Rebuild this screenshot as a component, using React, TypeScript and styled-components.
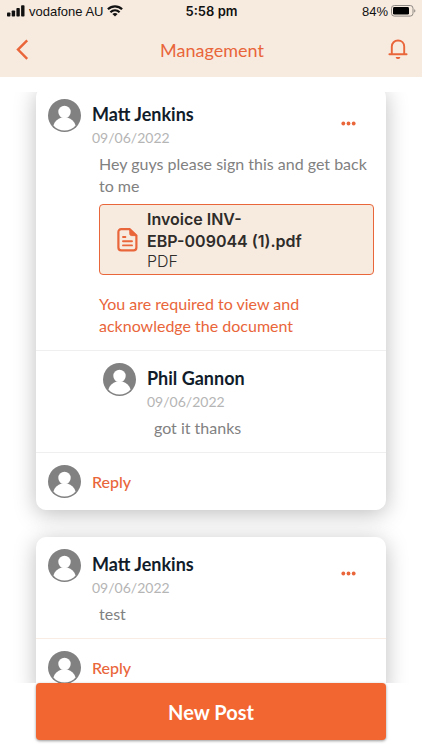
import React from "react";
import styled, { createGlobalStyle } from "styled-components";

const ORANGE = "#e9653a";
const SAND = "#f7ebe0";

const GlobalStyle = createGlobalStyle`
  *, *::before, *::after { box-sizing: border-box; }
  body {
    margin: 0;
    background: #fff;
    font-family: Lato, "Liberation Sans", sans-serif;
  }
  button { font: inherit; border: 0; padding: 0; background: none; cursor: pointer; }
  h1, h2, p { margin: 0; }
  svg { display: block; flex: none; }
`;

const Screen = styled.div`
  display: flex;
  flex-direction: column;
  height: 100vh;
`;

const TopArea = styled.header`
  flex: none;
  background: ${SAND};
`;

const StatusBar = styled.div`
  display: grid;
  grid-template-columns: 1fr auto 1fr;
  align-items: center;
  height: 22px;
  padding: 0 6px 0 7px;
  font-family: Inter, sans-serif;
  font-size: 13px;
  color: #111;
`;

const StatusGroup = styled.div<{ $end?: boolean }>`
  display: flex;
  align-items: center;
  gap: ${(p) => (p.$end ? "3px" : "4px")};
  justify-content: ${(p) => (p.$end ? "flex-end" : "flex-start")};
  font-family: "Liberation Sans", sans-serif;
  white-space: nowrap;
`;

const Clock = styled.time`
  font-weight: 600;
`;

const NavBar = styled.nav`
  display: grid;
  grid-template-columns: 1fr auto 1fr;
  align-items: center;
  height: 55px;
  padding: 0 12px 0 14px;
`;

const IconButton = styled.button<{ $end?: boolean }>`
  color: ${ORANGE};
  justify-self: ${(p) => (p.$end ? "end" : "start")};
`;

const Title = styled.h1`
  font-size: 18px;
  line-height: 24px;
  font-weight: 400;
  color: ${ORANGE};
`;

const Feed = styled.main`
  flex: 1;
  min-height: 0;
  margin-top: 15px;
  padding: 0 36px;
  overflow-y: auto;
  scrollbar-width: none;
`;

const CardList = styled.div`
  display: flex;
  flex-direction: column;
  gap: 27px;
  margin: -5px 0 24px;
`;

const Card = styled.article`
  border-radius: 10px;
  background: #fff;
  box-shadow: 0 4px 22px rgba(0, 0, 0, 0.26);
`;

const Entry = styled.section<{ $nested?: boolean }>`
  display: flex;
  align-items: flex-start;
  gap: 11px;
  padding: 12px 12px 13px ${(p) => (p.$nested ? "67px" : "12px")};
`;

const EntryMain = styled.div`
  flex: 1;
  min-width: 0;
`;

const EntryHead = styled.div`
  display: flex;
  align-items: center;
  justify-content: space-between;
  padding-right: 18px;
`;

const Author = styled.h2`
  font-size: 18px;
  line-height: 30px;
  font-weight: 700;
  color: #111c2b;
`;

const PostDate = styled.time`
  display: block;
  font-size: 14px;
  line-height: 18px;
  color: #b5b5b5;
`;

const MenuButton = styled.button`
  color: ${ORANGE};
`;

const Body = styled.div`
  padding: 6px 0 0 7px;
`;

const Text = styled.p`
  font-size: 16px;
  line-height: 22px;
  color: #818181;
`;

const Notice = styled(Text)`
  margin-top: 18px;
  color: ${ORANGE};
`;

const Attachment = styled.a`
  display: flex;
  align-items: center;
  gap: 9px;
  margin-top: 7px;
  padding: 3px 48px 3px 17px;
  border: 1px solid ${ORANGE};
  border-radius: 4px;
  background: ${SAND};
  color: ${ORANGE};
  text-decoration: none;
`;

const FileInfo = styled.span`
  display: flex;
  flex-direction: column;
  font-family: Inter, sans-serif;
  color: #2f2c2a;
`;

const FileName = styled.span`
  font-size: 16px;
  line-height: 22px;
  font-weight: 600;
`;

const FileKind = styled.span`
  font-size: 16px;
  line-height: 19px;
  font-weight: 300;
`;

const ReplyRow = styled.div`
  display: flex;
  align-items: center;
  gap: 11px;
  padding: 12px;
`;

const Divider = styled.hr<{ $warm?: boolean }>`
  height: 1px;
  margin: 0;
  border: 0;
  background: ${(p) => (p.$warm ? "#f8ece3" : "#efefef")};
`;

const ReplyButton = styled.button`
  font-size: 16px;
  line-height: 22px;
  font-weight: 500;
  color: ${ORANGE};
`;

const Footer = styled.footer`
  flex: none;
  display: flex;
  padding: 0 36px 10px;
`;

const NewPost = styled.button`
  flex: 1;
  height: 57px;
  border-radius: 4px;
  background: #f26631;
  box-shadow: 0 1px 3px rgba(0, 0, 0, 0.4);
  font-size: 20px;
  font-weight: 700;
  color: #fff;
`;

const Avatar = () => (
  <svg width="33" height="33" viewBox="0 0 33 33" aria-hidden="true">
    <circle cx="16.5" cy="16.5" r="16.5" fill="#818181" />
    <circle cx="16.5" cy="13" r="6.2" fill="#fff" />
    <path d="M5.4 26.4C6.4 22.6 9.6 20 13.6 18.6h5.8C23.4 20 26.6 22.6 27.6 26.4C24.8 29.8 20.8 31.4 16.5 31.4S8.2 29.8 5.4 26.4z" fill="#fff" />
  </svg>
);

const SignalIcon = () => (
  <svg width="18" height="12" viewBox="0 0 18 12" fill="#111" aria-hidden="true">
    <rect x="0" y="7.5" width="3.4" height="4" rx="0.8" />
    <rect x="4.7" y="5.5" width="3.4" height="6" rx="0.8" />
    <rect x="9.4" y="3" width="3.4" height="8.5" rx="0.8" />
    <rect x="14.1" y="0.2" width="3.4" height="11.3" rx="0.8" />
  </svg>
);

const WifiIcon = () => (
  <svg width="16" height="12" viewBox="0 0 16 12" fill="none" stroke="#111" strokeWidth="2.2" aria-hidden="true">
    <path d="M.9 4.3C5 .3 11 .3 15.1 4.3" />
    <path d="M3.4 7.2C6.1 4.7 9.9 4.7 12.6 7.2" />
    <path d="M8 11.6 5.4 9C7 7.8 9 7.8 10.6 9z" fill="#111" stroke="none" />
  </svg>
);

const BatteryIcon = () => (
  <svg width="25" height="12" viewBox="0 0 25 12" aria-hidden="true">
    <rect x="0.5" y="0.5" width="21.5" height="10.6" rx="2.8" fill="none" stroke="#8f8983" />
    <rect x="2" y="2" width="16" height="7.6" rx="1.4" fill="#000" />
    <path d="M23.2 4.2C24.8 4.5 24.8 7.2 23.2 7.5z" fill="#8f8983" />
  </svg>
);

const BackIcon = () => (
  <svg width="16" height="22" viewBox="0 0 16 22" fill="none" stroke="currentColor" strokeWidth="2.4" aria-hidden="true">
    <path d="M13.2 1.4 4 10.6l9.2 9.2" />
  </svg>
);

const BellIcon = () => (
  <svg width="24" height="24" viewBox="0 0 24 24" fill="none" stroke="currentColor" strokeWidth="1.9" strokeLinecap="round" strokeLinejoin="round" aria-hidden="true">
    <path d="M3.4 16.2h17.2M5.8 16V8.6C5.8 5 8.4 2.5 12 2.5S18.2 5 18.2 8.6V16" />
    <path d="M10.3 19.6c.6 1.2 2.8 1.2 3.4 0z" fill="currentColor" strokeWidth="1.2" />
  </svg>
);

const DotsIcon = () => (
  <svg width="15" height="5" viewBox="0 0 15 5" fill="currentColor" aria-hidden="true">
    <circle cx="2.3" cy="2.5" r="1.9" />
    <circle cx="7.5" cy="2.5" r="1.9" />
    <circle cx="12.7" cy="2.5" r="1.9" />
  </svg>
);

const DocumentIcon = () => (
  <svg width="21" height="24" viewBox="0 0 21 24" fill="none" stroke="currentColor" strokeWidth="2.2" strokeLinejoin="round" strokeLinecap="round" aria-hidden="true">
    <path d="M12.8 1.2H4.2C2.5 1.2 1.4 2.3 1.4 4v15.6c0 1.7 1.1 2.8 2.8 2.8h12.4c1.7 0 2.8-1.1 2.8-2.8V7.6z" />
    <path d="M12.8 1.2v4.6c0 1.1.7 1.8 1.8 1.8h4.8z" fill="currentColor" strokeWidth="1" />
    <path d="M6 9h2.4M6 13.3h9M6 17.4h9" strokeWidth="1.9" />
  </svg>
);

type EntryProps = {
  author: string;
  date: string;
  text: string;
  nested?: boolean;
  children?: React.ReactNode;
};

const PostEntry = ({ author, date, text, nested, children }: EntryProps) => (
  <Entry $nested={nested}>
    <Avatar />
    <EntryMain>
      <EntryHead>
        <div>
          <Author>{author}</Author>
          <PostDate>{date}</PostDate>
        </div>
        {!nested && (
          <MenuButton type="button" aria-label="Post options">
            <DotsIcon />
          </MenuButton>
        )}
      </EntryHead>
      <Body>
        <Text>{text}</Text>
        {children}
      </Body>
    </EntryMain>
  </Entry>
);

const Reply = () => (
  <ReplyRow>
    <Avatar />
    <ReplyButton type="button">Reply</ReplyButton>
  </ReplyRow>
);

export default function App() {
  return (
    <Screen>
      <GlobalStyle />
      <TopArea>
        <StatusBar>
          <StatusGroup>
            <SignalIcon />
            <span>vodafone AU</span>
            <WifiIcon />
          </StatusGroup>
          <Clock>5:58 pm</Clock>
          <StatusGroup $end>
            <span>84%</span>
            <BatteryIcon />
          </StatusGroup>
        </StatusBar>
        <NavBar>
          <IconButton type="button" aria-label="Back">
            <BackIcon />
          </IconButton>
          <Title>Management</Title>
          <IconButton type="button" $end aria-label="Notifications">
            <BellIcon />
          </IconButton>
        </NavBar>
      </TopArea>
      <Feed>
        <CardList>
          <Card>
            <PostEntry author="Matt Jenkins" date="09/06/2022" text="Hey guys please sign this and get back to me">
              <Attachment href="#invoice">
                <DocumentIcon />
                <FileInfo>
                  <FileName>Invoice INV-</FileName>
                  <FileName>EBP-009044 (1).pdf</FileName>
                  <FileKind>PDF</FileKind>
                </FileInfo>
              </Attachment>
              <Notice>You are required to view and acknowledge the document</Notice>
            </PostEntry>
            <Divider />
            <PostEntry nested author="Phil Gannon" date="09/06/2022" text="got it thanks" />
            <Divider />
            <Reply />
          </Card>
          <Card>
            <PostEntry author="Matt Jenkins" date="09/06/2022" text="test" />
            <Divider $warm />
            <Reply />
          </Card>
        </CardList>
      </Feed>
      <Footer>
        <NewPost type="button">New Post</NewPost>
      </Footer>
    </Screen>
  );
}
